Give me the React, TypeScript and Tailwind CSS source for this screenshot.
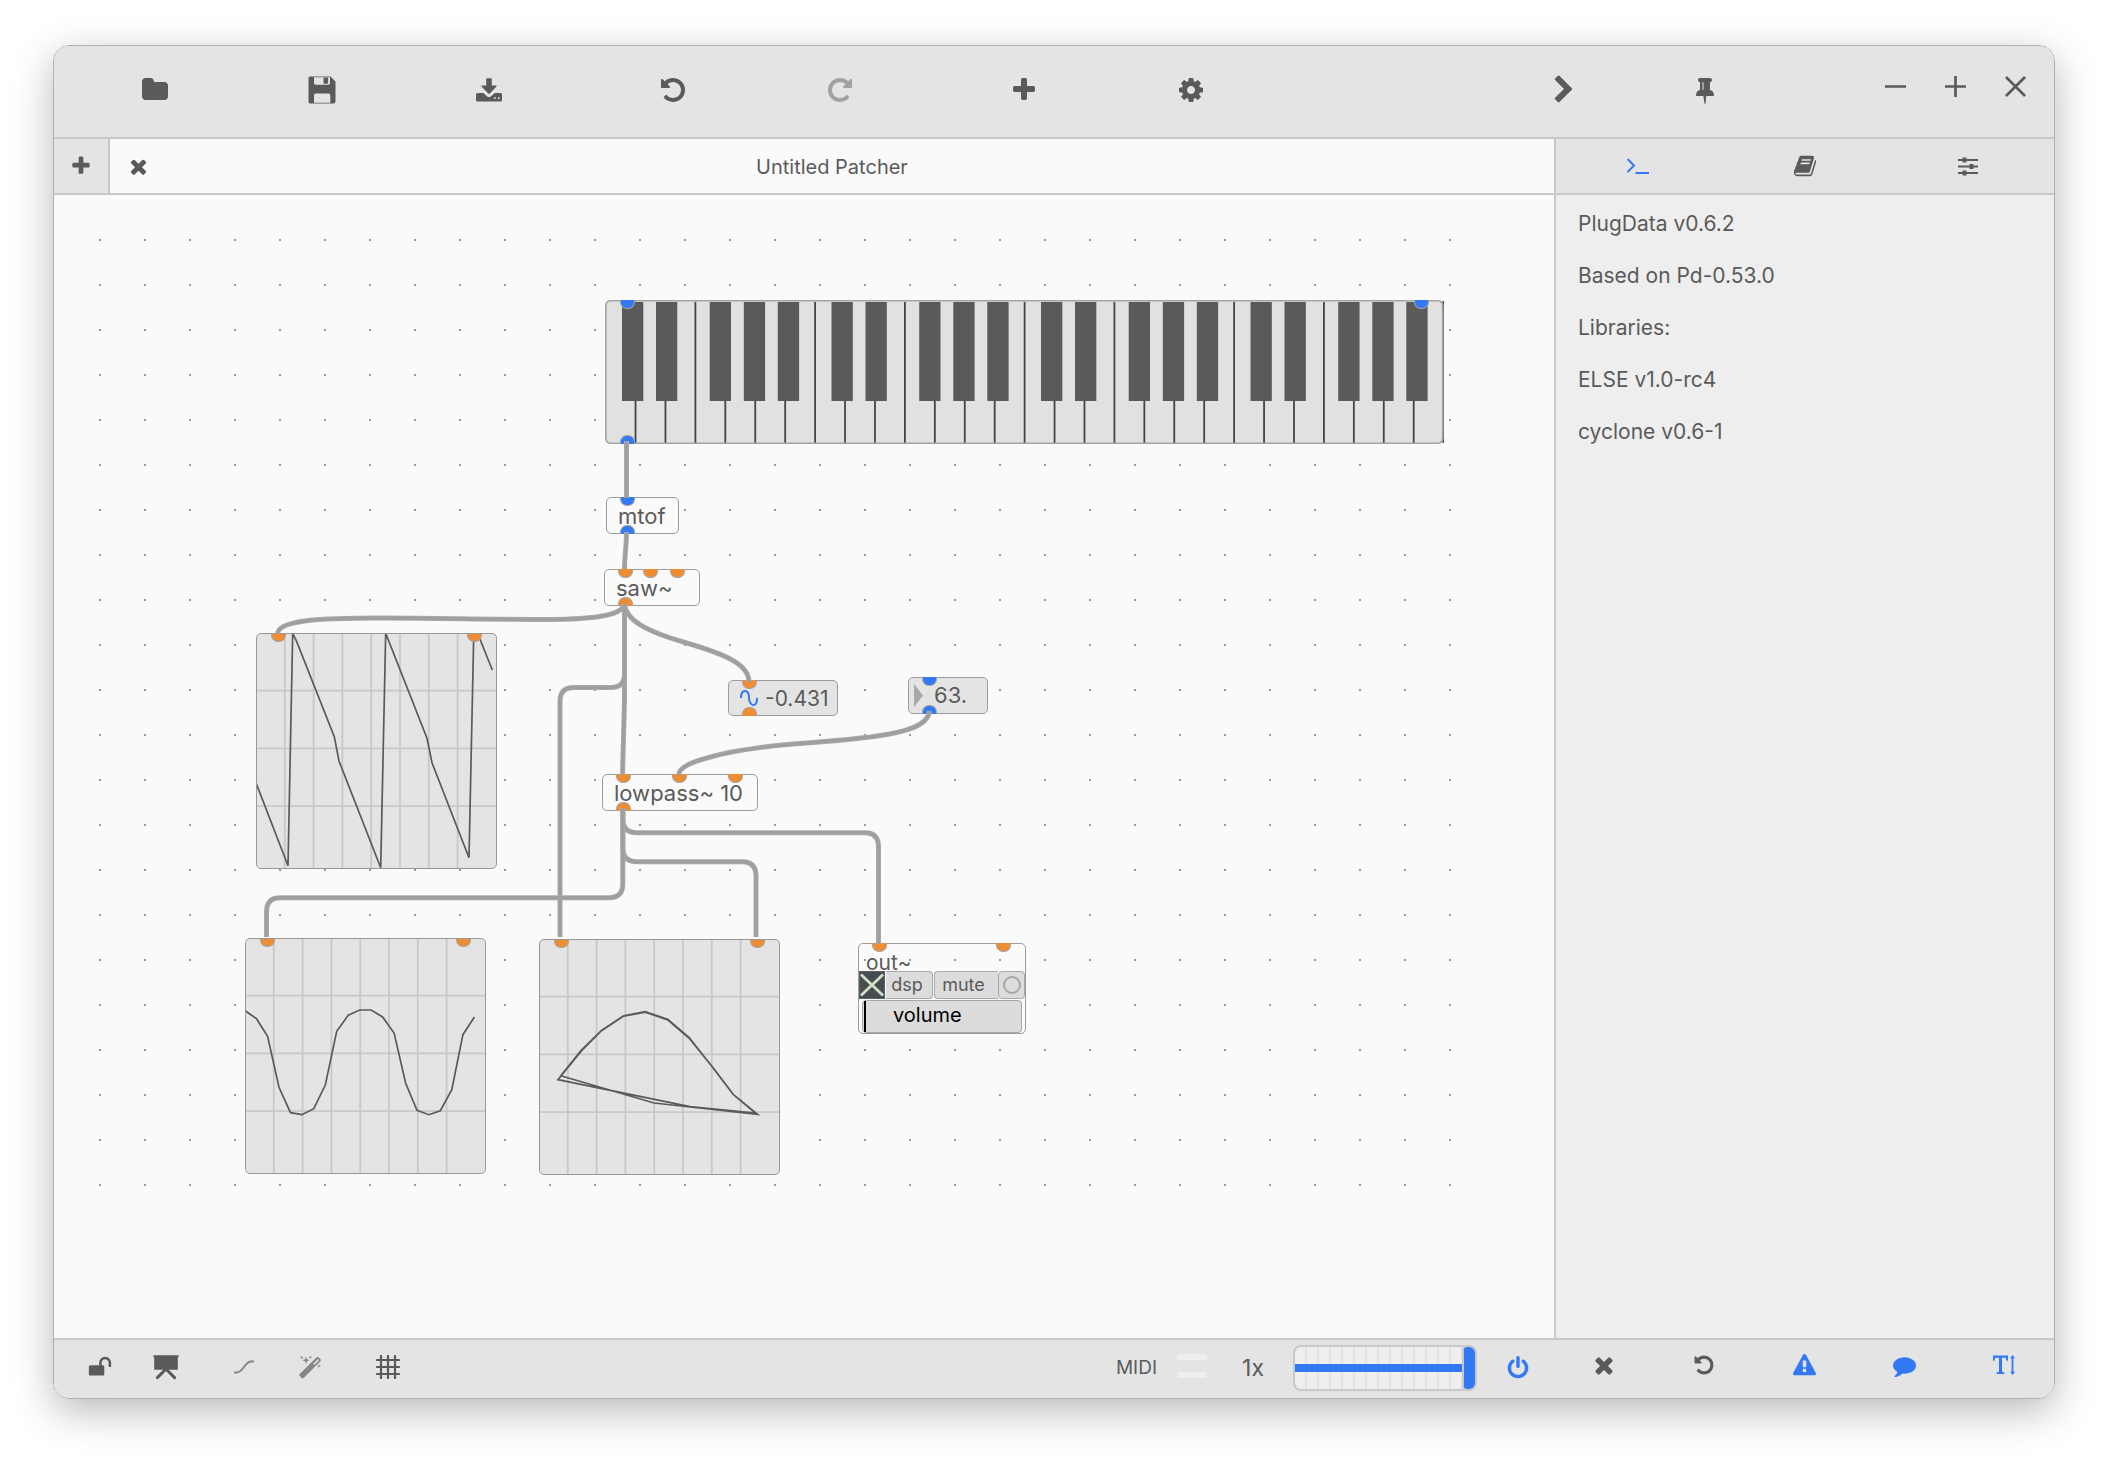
import React from "react";

type IconProps = { className?: string; box?: string; children: React.ReactNode };

function Svg({ className = "", box = "0 0 1792 1792", children }: IconProps) {
  return (
    <svg viewBox={box} className={className} fill="currentColor" aria-hidden="true">
      {children}
    </svg>
  );
}

const P = {
  folder:
    "M1728 608v704q0 92-66 158t-158 66h-1216q-92 0-158-66t-66-158v-960q0-92 66-158t158-66h320q92 0 158 66t66 158v32h672q92 0 158 66t66 158z",
  plus:
    "M1600 736v192q0 40-28 68t-68 28h-416v416q0 40-28 68t-68 28h-192q-40 0-68-28t-28-68v-416h-416q-40 0-68-28t-28-68v-192q0-40 28-68t68-28h416v-416q0-40 28-68t68-28h192q40 0 68 28t28 68v416h416q40 0 68 28t28 68z",
  undo:
    "M1664 896q0 156-61 298t-164 245-245 164-298 61q-172 0-327-72.5t-264-204.5q-7-10-6.5-22.5t8.5-20.5l137-138q10-9 25-9 16 2 23 12 73 95 179 147t225 52q104 0 198.5-40.5t163.5-109.5 109.5-163.5 40.5-198.5-40.5-198.5-109.5-163.5-163.5-109.5-198.5-40.5q-98 0-188 35.5t-160 101.5l137 138q31 30 14 69-17 40-59 40h-448q-26 0-45-19t-19-45v-448q0-42 40-59 39-17 69 14l130 129q107-101 244.5-156.5t284.5-55.5q156 0 298 61t245 164 164 245 61 298z",
  times:
    "M1490 1322q0 40-28 68l-136 136q-28 28-68 28t-68-28l-294-294-294 294q-28 28-68 28t-68-28l-136-136q-28-28-28-68t28-68l294-294-294-294q-28-28-28-68t28-68l136-136q28-28 68-28t68 28l294 294 294-294q28-28 68-28t68 28l136 136q28 28 28 68t-28 68l-294 294 294 294q28 28 28 68z",
  cog:
    "M1152 896q0-106-75-181t-181-75-181 75-75 181 75 181 181 75 181-75 75-181zm512-109v222q0 12-8 23t-20 13l-185 28q-19 54-39 91 35 50 107 138 10 12 10 25t-9 23q-27 37-99 108t-94 71q-12 0-26-9l-138-108q-44 23-91 38-16 136-29 186-7 28-36 28h-222q-14 0-24.5-8.5t-11.5-21.5l-28-184q-49-16-90-37l-141 107q-10 9-25 9-14 0-25-11-126-114-165-168-7-10-7-23 0-12 8-23 15-21 51-66.5t54-70.5q-27-50-41-99l-183-27q-13-2-21-12.5t-8-23.5v-222q0-12 8-23t19-13l186-28q14-46 39-92-40-57-107-138-10-12-10-24 0-10 9-23 26-36 98.5-107.5t94.5-71.5q13 0 26 10l138 107q44-23 91-38 16-136 29-186 7-28 36-28h222q14 0 24.5 8.5t11.5 21.5l28 184q49 16 90 37l142-107q9-9 24-9 13 0 25 10 129 119 165 170 7 8 7 22 0 12-8 23-15 21-51 66.5t-54 70.5q26 50 41 98l183 28q13 2 21 12.5t8 23.5z",
  comment:
    "M1792 896q0 174-120 321.5t-326 233-450 85.5q-70 0-145-8-198 175-460 242-49 14-114 22-17 2-30.5-9t-17.5-29v-1q-3-4-.5-12t2-10 4.5-9.5l6-9 7-8.5 8-9q7-8 31-34.5t34.5-38 31-39.5 32.5-51 27-59 26-76q-157-89-247.5-220t-90.5-281q0-130 71-248.5t191-204.5 286-136.5 348-50.5q244 0 450 85.5t326 233 120 321.5z",
  warning:
    "M1024 1375v-190q0-14-9.5-23.5t-22.5-9.5h-192q-13 0-22.5 9.5t-9.5 23.5v190q0 14 9.5 23.5t22.5 9.5h192q13 0 22.5-9.5t9.5-23.5zm-2-374l18-459q0-12-10-19-13-11-24-11h-220q-11 0-24 11-10 7-10 21l17 457q0 10 10 16.5t24 6.5h185q14 0 23.5-6.5t10.5-16.5zm-14-934l768 1408q35 63-2 126-17 29-46.5 46t-63.5 17h-1536q-34 0-63.5-17t-46.5-46q-37-63-2-126l768-1408q17-31 47-49t65-18 65 18 47 49z",
  power:
    "M1664 896q0 156-61 298t-164 245-245 164-298 61-298-61-245-164-164-245-61-298q0-182 80.5-343t226.5-270q43-32 95.5-25t83.5 50q32 42 24.5 94.5t-49.5 84.5q-98 74-151.5 181t-53.5 228q0 104 40.5 198.5t109.5 163.5 163.5 109.5 198.5 40.5 198.5-40.5 163.5-109.5 109.5-163.5 40.5-198.5q0-121-53.5-228t-151.5-181q-42-32-49.5-84.5t24.5-94.5q31-43 84-50t95 25q146 109 226.5 270t80.5 343zm-640-768v640q0 52-38 90t-90 38-90-38-38-90v-640q0-52 38-90t90-38 90 38 38 90z",
  chevron:
    "M1363 877l-742 742q-19 19-45 19t-45-19l-166-166q-19-19-19-45t19-45l531-531-531-531q-19-19-19-45t19-45l166-166q19-19 45-19t45 19l742 742q19 19 19 45t-19 45z",
  pin:
    "M800 864v-448q0-14-9-23t-23-9-23 9-9 23v448q0 14 9 23t23 9 23-9 9-23zm672 352q0 26-19 45t-45 19h-429l-51 483q-2 12-10.5 20.5t-20.5 8.5h-1q-27 0-32-27l-76-485h-404q-26 0-45-19t-19-45q0-123 78.5-221.5t177.5-98.5v-512q-52 0-90-38t-38-90 38-90 90-38h640q52 0 90 38t38 90-38 90-90 38v512q99 0 177.5 98.5t78.5 221.5z",
  book:
    "M1703 478q40 57 18 129l-275 906q-19 64-76.5 107.5t-122.5 43.5h-923q-77 0-148.5-53.5t-99.5-131.5q-24-67-2-127 0-4 3-27t4-37q1-8-3-21.5t-3-19.5q2-11 8-21t16.5-23.5 16.5-23.5q23-38 45-91.5t30-91.5q3-10 .5-30t-.5-28q3-11 17-28t17-23q21-36 42-92t25-90q1-9-2.5-32t.5-28q4-13 22-30.5t22-22.5q19-26 42.5-84.5t27.5-96.5q1-8-3-25.5t-2-26.5q2-8 9-18t18-23 17-21q8-12 16.5-30.5t15-35 16-36 19.5-32 26.5-23.5 36-11.5 47.5 5.5l-1 3q38-9 51-9h761q74 0 114 56t18 130l-274 906q-36 119-71.5 153.5t-128.5 34.5h-869q-27 0-38 15-11 16-1 43 24 70 144 70h923q29 0 56-15.5t35-41.5l300-987q7-22 5-57 38 15 59 43zm-1064 2q-4 13 2 22.5t20 9.5h608q13 0 25.5-9.5t16.5-22.5l21-64q4-13-2-22.5t-20-9.5h-608q-13 0-25.5 9.5t-16.5 22.5zm-83 256q-4 13 2 22.5t20 9.5h608q13 0 25.5-9.5t16.5-22.5l21-64q4-13-2-22.5t-20-9.5h-608q-13 0-25.5 9.5t-16.5 22.5z",
  unlock:
    "M1728 576v256q0 26-19 45t-45 19h-64q-26 0-45-19t-19-45v-256q0-106-75-181t-181-75-181 75-75 181v192h96q40 0 68 28t28 68v576q0 40-28 68t-68 28h-960q-40 0-68-28t-28-68v-576q0-40 28-68t68-28h672v-192q0-185 131.5-316.5t316.5-131.5 316.5 131.5 131.5 316.5z",
};

function Glyph({ d, className }: { d: string; className: string }) {
  return (
    <Svg className={className}>
      <path d={d} />
    </Svg>
  );
}

function SaveIcon() {
  return (
    <Svg className="size-7" box="0 0 28 28">
      <path
        fillRule="evenodd"
        d="M2 0.500H22.500L27.500 5.500V25.500Q27.500 27.500 25.500 27.500H2Q0.500 27.500 0.500 25.500V2.500Q0.500 0.500 2 0.500ZM6 1.300V7Q6 8.700 7.700 8.700H20.300Q22 8.700 22 7V1.300ZM6 26.800H22.300V19.200Q22.300 17.500 20.600 17.500H7.700Q6 17.500 6 19.200Z"
      />
      <rect x="15.500" y="1.600" width="4.600" height="6.200" rx="1" />
    </Svg>
  );
}

function DownloadIcon() {
  return (
    <Svg className="size-7" box="0 0 28 28">
      <path d="M11.200 3Q11.200 2.200 12 2.200h4q.8 0 .8.800V9.500h4.200q1.400 0 .5 1L14.800 17.600q-.8.800-1.600 0L6.500 10.500q-.9-1 .5-1h4.200z" />
      <path
        fillRule="evenodd"
        d="M2.500 17h5.800l3.600 3.200q2.100 1.700 4.200 0l3.600-3.200h5.800q1.500 0 1.500 1.500v5.500q0 1.500-1.500 1.500h-23q-1.500 0-1.500-1.500v-5.500q0-1.500 1.500-1.500zM19.200 21.200v1.800h1.500v-1.800zM23 21.200v1.800h1.500v-1.800z"
      />
    </Svg>
  );
}

function EaselIcon() {
  return (
    <Svg className="size-[26px]" box="0 0 26 26">
      <path d="M0.500 1.200h25v2h-0.700v12.600H1.200V3.200H0.500z" />
      <path
        d="M4.400 23.600 13 15l8.600 8.600"
        fill="none"
        stroke="currentColor"
        strokeWidth="3"
        strokeLinecap="round"
      />
    </Svg>
  );
}

function WandIcon() {
  return (
    <Svg className="size-6" box="0 0 24 24">
      <path
        fillRule="evenodd"
        d="M18.600 2.300a1.500 1.500 0 0 1 2 0l1.900 1.900a1.500 1.500 0 0 1 0 2L5.600 23a1.500 1.500 0 0 1-2 0l-1.900-1.900a1.500 1.500 0 0 1 0-2zM20 4l-4.800 4.900 1.100 1.100L21 5.200z"
      />
      <path d="M8 1.500 9 4.200l2.700 1L9 6.200 8 8.900 7 6.200l-2.700-1L7 4.200zM3.700.800l.5 1.300 1.300.5-1.300.5-.5 1.300-.5-1.300-1.300-.5 1.300-.5zM12.300.500l.5 1.300 1.300.5-1.300.5-.5 1.300-.5-1.300-1.300-.5 1.300-.5zM21 9.200l.5 1.400 1.400.5-1.400.5-.5 1.400-.5-1.400-1.400-.5 1.400-.5z" />
    </Svg>
  );
}

function TextHeightIcon() {
  return (
    <Svg className="h-5 w-6" box="0 0 24 20">
      <path d="M1 0.500h15v5.200h-1.400l-.8-2.900H10v13.900l2.400.7v1.600H4.600v-1.600l2.400-.7V2.800H3.200l-.8 2.900H1z" />
      <path d="M20.500 0 23 3.200h-1.600v13.600H23L20.500 20 18 16.800h1.600V3.200H18z" />
    </Svg>
  );
}

function ToolButton({
  label,
  className = "",
  children,
}: {
  label: string;
  className?: string;
  children: React.ReactNode;
}) {
  return (
    <button type="button" aria-label={label} className={`flex h-full items-center justify-center ${className}`}>
      {children}
    </button>
  );
}

function Toolbar() {
  return (
    <header className="flex h-[93px] shrink-0 items-stretch border-b-2 border-[#c8c8c8] bg-[#e4e4e4] pb-1 pl-[17px] pr-[9px]">
      <div className="flex gap-[17px]">
        <div className="flex">
          <ToolButton label="Open" className="w-[167px]">
            <Glyph d={P.folder} className="size-7" />
          </ToolButton>
          <ToolButton label="Save" className="w-[167px]">
            <SaveIcon />
          </ToolButton>
          <ToolButton label="Save as" className="w-[167px]">
            <DownloadIcon />
          </ToolButton>
        </div>
        <div className="flex">
          <ToolButton label="Undo" className="w-[167px]">
            <Glyph d={P.undo} className="size-7" />
          </ToolButton>
          <ToolButton label="Redo" className="w-[167px] text-[#a1a1a1]">
            <Glyph d={P.undo} className="size-7 -scale-x-100" />
          </ToolButton>
        </div>
        <div className="flex">
          <ToolButton label="Add object" className="w-[167px]">
            <Glyph d={P.plus} className="size-7" />
          </ToolButton>
          <ToolButton label="Settings" className="w-[167px]">
            <Glyph d={P.cog} className="size-7" />
          </ToolButton>
        </div>
      </div>
      <div className="ml-auto flex">
        <ToolButton label="Hide sidebar" className="w-[141px]">
          <Glyph d={P.chevron} className="size-[30px]" />
        </ToolButton>
        <ToolButton label="Pin sidebar" className="mr-[90px] w-[141px]">
          <Glyph d={P.pin} className="size-7" />
        </ToolButton>
        <div className="flex pb-[6px]">
          {[
            ["Minimise", "M0 11H22"],
            ["Maximise", "M0 11H22M11 0V22"],
            ["Close", "M1 1 21 21M21 1 1 21"],
          ].map(([label, d]) => (
            <ToolButton key={label} label={label} className="w-[60px]">
              <svg viewBox="0 0 22 22" className="size-[21px]" fill="none" stroke="currentColor" strokeWidth="2.800">
                <path d={d} />
              </svg>
            </ToolButton>
          ))}
        </div>
      </div>
    </header>
  );
}

/* Inlets sit on the top edge of an object, outlets on the bottom edge. */
function Inlet({ className }: { className: string }) {
  return <span className={`absolute -top-px h-[9px] w-[15px] rounded-b-[7px] border border-t-0 border-[#a3a3a3] ${className}`} />;
}
function Outlet({ className }: { className: string }) {
  return <span className={`absolute -bottom-px h-[9px] w-[15px] rounded-t-[7px] border border-b-0 border-[#a3a3a3] ${className}`} />;
}

const WHITE = 29.93;
const BLACK_OFFSETS = [17, 51, 104.700, 138.800, 172.800];

function Keyboard() {
  const blacks = [0, 1, 2, 3].flatMap((o) => BLACK_OFFSETS.map((b) => b + o * WHITE * 7));
  return (
    <div className="absolute left-[551px] top-[105px] h-[144px] w-[839px]">
      <svg viewBox="0 0 839 144" className="size-full" aria-label="Keyboard">
        <rect x="1" y="1" width="837" height="142" rx="4" fill="#e1e1e1" />
        {Array.from({ length: 27 }, (_, i) => (
          <rect key={i} x={(i + 1) * WHITE - 0.300} y="2" width="1.800" height="141" fill="#444444" />
        ))}
        {blacks.map((x) => (
          <rect key={x} x={x} y="2" width="21.300" height="99" fill="#5a5a5a" />
        ))}
        <rect x="837.500" y="1" width="1.500" height="142" fill="#444444" />
        <rect x="0.750" y="0.750" width="837" height="142.500" rx="5" fill="none" stroke="#a5a5a5" strokeWidth="1.700" />
      </svg>
      <Inlet className="left-[15px] top-0 bg-[#3379f6]" />
      <Inlet className="left-[809px] top-0 bg-[#3379f6]" />
      <Outlet className="bottom-0 left-[15px] bg-[#3379f6]" />
    </div>
  );
}

function Scope({ place, points }: { place: string; points: string }) {
  return (
    <div className={`absolute h-[236px] w-[241px] overflow-hidden rounded-[5px] border border-[#989898] bg-[#e4e4e4] ${place}`}>
      <svg viewBox="1 1 239 234" className="size-full" aria-label="Oscilloscope">
        <g stroke="#c8c8c8" strokeWidth="1.800">
          {[1, 2, 3, 4, 5, 6, 7].map((i) => (
            <path key={i} d={`M${i * 28.800} 0V236`} />
          ))}
          {[1, 2, 3].map((i) => (
            <path key={i} d={`M0 ${i * 57.700}H241`} />
          ))}
        </g>
        <polyline points={points} fill="none" stroke="#5a5a5a" strokeWidth="1.700" />
      </svg>
      <Inlet className="left-[14px] bg-[#f08c32]" />
      <Inlet className="left-[210px] bg-[#f08c32]" />
    </div>
  );
}

const SAW =
  "0,149.700 32,232.700 36.700,0.300 40.700,8.700 78.300,103.700 83,128 124.700,234.700 129.700,0.300 171,105.300 176,129.700 213,224.700 217.700,3.700 222.300,2 236.300,37";
const SINE =
  "0,72.700 11.500,80.700 22.600,98.300 34,149.300 45.500,174.700 57,176.700 68.800,170.700 80.300,147 91.700,93.300 103.200,77.300 114.700,72 126.200,72 137.600,79 149.100,95 160.600,145 172,172.300 183.900,176.700 195.300,172.700 206.800,151.700 217.900,96.700 229.400,79";
const PHASE =
  "21.800,136.700 42.200,111.300 62.500,91.300 84.700,76.700 106.200,72.700 128.700,80.300 150.200,98.700 172.400,126.700 194.200,155.300 216.400,174 151,167.700 18.900,140.700 42.600,111.700 62.500,91.700 84.700,77.100 106.200,73.100 128.700,80.900 150.200,99.300 172.800,127.100 194.200,155.300 218.600,175.300 151,168 115,164 21.800,136.700";

const WIRES = [
  "M626.500 441V498",
  "M626.500 532C626.500 548 624.500 554 624.500 569",
  "M624.500 604C622 618 580 619.500 540 619.500C480 619.500 440 618 380 618C320 618 278 620 277.500 634",
  "M624.500 604C626 620 645 631 685 642.500C728 655 749 665 749 682",
  "M624.500 604V700L622.500 775",
  "M624.500 604V674Q624.500 687.500 611 687.500H574Q560 687.500 560 701V937",
  "M622.800 808V819Q622.800 832.700 637 832.700H865Q878.500 832.700 878.500 847V944",
  "M622.800 808V848Q622.800 861.700 637 861.700H742Q756 861.700 756 876V937",
  "M622.800 808V884Q622.800 897.700 609 897.700H280Q266.500 897.700 266.500 912V937",
  "M929.500 711C928 726 905 732 877 736C850 740 820 742 793 744C760 747 730 751 707 758C688 763 679 769 678.500 775",
];

function Wires() {
  return (
    <svg viewBox="54 195 1500 1143" className="pointer-events-none absolute left-0 top-0 h-[1143px] w-[1500px]" fill="none">
      {WIRES.map((d) => (
        <g key={d}>
          <path d={d} stroke="#acacac" strokeWidth="5" />
          <path d={d} stroke="#9f9f9f" strokeWidth="3.400" />
        </g>
      ))}
    </svg>
  );
}

const OBJ = "absolute rounded-[5px] border border-[#9c9c9c] text-[22px] leading-[37px]";

function OutObject() {
  return (
    <div className="absolute left-[804px] top-[748px] h-[91px] w-[168px] rounded-[5px] border border-[#9c9c9c]">
      <div className="h-[27px] pl-[7px] text-[21px] leading-[37px]">out~</div>
      <div className="relative flex h-7 text-[18px] leading-[24px]">
        <label className="relative block w-[26px] border border-[#5a6064] bg-[#474c50]">
          <input type="checkbox" defaultChecked aria-label="dsp toggle" className="absolute inset-0 size-full opacity-0" />
          <svg viewBox="0 0 25 26" className="size-full" stroke="#cfe1c3" strokeWidth="3">
            <path d="M1 2 24 24M24 2 1 24" />
          </svg>
        </label>
        <button type="button" className="ml-px w-[47px] rounded-r-[4px] border border-l-0 border-[#a8a8a8] bg-[#dcdcdc] pr-1">dsp</button>
        <button type="button" className="ml-px w-[64px] rounded-l-[4px] border border-r-0 border-[#a8a8a8] bg-[#dcdcdc] pr-[6px]">mute</button>
        <button
          type="button"
          aria-label="bang"
          className="flex w-[27px] items-center justify-center rounded-[4px] border border-[#a8a8a8] bg-[#dcdcdc]"
        >
          <span className="size-[18px] rounded-full border-2 border-[#a8a8a8]" />
        </button>
      </div>
      <div className="mx-[3px] mt-px flex h-[33px] items-stretch rounded-[4px] border border-[#a8a8a8] bg-[#dcdcdc] text-[20px] leading-[29px] text-black">
        <span className="ml-px w-[2px] bg-black" />
        <span className="ml-[27px]">volume</span>
      </div>
      <Inlet className="left-[13px] bg-[#f08c32]" />
      <Inlet className="left-[137px] bg-[#f08c32]" />
    </div>
  );
}

function Canvas() {
  return (
    <main className="relative min-h-[1143px] flex-1 overflow-hidden bg-[#fafafa]">
      <svg className="absolute left-[45px] top-[44px] h-[947px] w-[1352px]" aria-hidden="true">
        <defs>
          <pattern id="dots" width="45" height="45" patternUnits="userSpaceOnUse">
            <rect width="2" height="2" fill="#9a9a9a" />
          </pattern>
        </defs>
        <rect width="1352" height="947" fill="url(#dots)" />
      </svg>

      <Keyboard />

      <div className={`${OBJ} left-[552px] top-[302px] h-[37px] w-[73px] bg-[#fafafa] pl-[11px]`}>
        mtof
        <Inlet className="left-[13px] bg-[#3379f6]" />
        <Outlet className="left-[13px] bg-[#3379f6]" />
      </div>

      <div className={`${OBJ} left-[550px] top-[374px] h-[37px] w-[96px] bg-[#fafafa] pl-[11px]`}>
        saw~
        <Inlet className="left-[13px] bg-[#f08c32]" />
        <Inlet className="left-[38px] bg-[#f08c32]" />
        <Inlet className="left-[65px] bg-[#f08c32]" />
        <Outlet className="left-[13px] bg-[#f08c32]" />
      </div>

      <div className={`${OBJ} left-[674px] top-[485px] flex h-[36px] w-[110px] items-center bg-[#e4e4e4] pl-[11px]`}>
        <svg viewBox="0 0 18 16" className="h-4 w-[18px]" fill="none" stroke="#3379f6" strokeWidth="2">
          <path d="M1 8C1 3 3 1 5 1C8 1 9 4 9 8C9 12 11 15 13.500 15C16 15 17 12 17 8" />
        </svg>
        <output className="ml-[7px] text-[21px]">-0.431</output>
        <Inlet className="left-[13px] bg-[#f08c32]" />
        <Outlet className="left-[13px] bg-[#f08c32]" />
      </div>

      <div className={`${OBJ} left-[854px] top-[482px] flex h-[37px] w-[80px] items-center bg-[#e4e4e4] pl-[5px]`}>
        <svg viewBox="0 0 9 23" className="h-[23px] w-[9px]" fill="#a8a8a8">
          <path d="M0 0 9 11.500 0 23z" />
        </svg>
        <input aria-label="Cutoff" defaultValue="63." className="ml-[11px] w-12 bg-transparent" />
        <Inlet className="left-[13px] bg-[#3379f6]" />
        <Outlet className="left-[13px] bg-[#3379f6]" />
      </div>

      <div className={`${OBJ} left-[548px] top-[579px] h-[37px] w-[156px] bg-[#fafafa] pl-[11px]`}>
        lowpass~ 10
        <Inlet className="left-[13px] bg-[#f08c32]" />
        <Inlet className="left-[69px] bg-[#f08c32]" />
        <Inlet className="left-[125px] bg-[#f08c32]" />
        <Outlet className="left-[13px] bg-[#f08c32]" />
      </div>

      <Scope place="left-[202px] top-[438px]" points={SAW} />
      <Scope place="left-[191px] top-[743px]" points={SINE} />
      <Scope place="left-[485px] top-[744px]" points={PHASE} />
      <OutObject />
      <Wires />
    </main>
  );
}

function Sidebar() {
  return (
    <aside className="flex w-[500px] shrink-0 flex-col border-l-2 border-[#c8c8c8] bg-[#eeeeee]">
      <div className="flex h-14 shrink-0 border-b-2 border-[#c8c8c8] bg-[#e4e4e4] pr-1">
        <ToolButton label="Console" className="flex-1 pr-[3px] text-[#3379f6]">
          <svg viewBox="0 0 24 18" className="h-[18px] w-6" fill="none" stroke="currentColor" strokeWidth="2">
            <path d="M1.500 2 8 8.500 1.500 15M9.500 16H23" />
          </svg>
        </ToolButton>
        <ToolButton label="Documentation" className="flex-1">
          <Glyph d={P.book} className="size-6" />
        </ToolButton>
        <ToolButton label="Parameters" className="flex-1">
          <svg viewBox="0 0 20 20" className="size-5" fill="none" stroke="currentColor" strokeWidth="2">
            <path d="M0 4H20M0 10.500H20M0 17H20" />
            <path d="M6.500 1.500V6.500M13.500 8V13M6.500 14.500V19.500" strokeWidth="4" />
          </svg>
        </ToolButton>
      </div>
      <ul className="px-[22px] pt-[3px] text-[21px] leading-[52px]">
        <li>PlugData v0.6.2</li>
        <li>Based on Pd-0.53.0</li>
        <li>Libraries:</li>
        <li>ELSE v1.0-rc4</li>
        <li>cyclone v0.6-1</li>
      </ul>
    </aside>
  );
}

function StatusBar() {
  return (
    <footer className="flex h-[60px] shrink-0 items-center border-t-2 border-[#c8c8c8] bg-[#e4e4e4]">
      <div className="flex h-full items-center pb-1 pl-3">
        <ToolButton label="Edit mode" className="w-[67px]">
          <Glyph d={P.unlock} className="size-6" />
        </ToolButton>
        <ToolButton label="Presentation mode" className="w-[66px]">
          <EaselIcon />
        </ToolButton>
        <ToolButton label="Connection style" className="ml-3 w-[66px] text-[#868686]">
          <svg viewBox="0 0 22 14" className="h-[14px] w-[22px]" fill="none" stroke="currentColor" strokeWidth="2">
            <path d="M1 12.500H4C10 12.500 12 1.500 18 1.500H21" />
          </svg>
        </ToolButton>
        <ToolButton label="Tidy connections" className="w-[66px] text-[#868686]">
          <WandIcon />
        </ToolButton>
        <ToolButton label="Grid" className="ml-3 w-[66px]">
          <svg viewBox="0 0 24 24" className="size-6" fill="none" stroke="currentColor" strokeWidth="2.200" strokeLinecap="round">
            <path d="M5 1V23M12 1V23M19 1V23M1 5H23M1 12H23M1 19H23" />
          </svg>
        </ToolButton>
      </div>
      <div className="ml-auto flex h-full items-center pb-[2px]">
        <span className="text-[19px]">MIDI</span>
        <span className="ml-5 flex flex-col gap-3 pb-1">
          <i className="h-[6px] w-[30px] rounded-sm bg-[#eeeeee]" />
          <i className="h-[6px] w-[30px] rounded-sm bg-[#eeeeee]" />
        </span>
        <button type="button" className="ml-[14px] w-[64px] text-[23px]">1x</button>
        <span className="ml-2 flex h-[46px] w-[184px] overflow-hidden rounded-[8px] border-2 border-[#c8c8c8] bg-[#eeeeee] bg-[repeating-linear-gradient(90deg,transparent_0_10px,#e2e2e2_10px_12px)]">
          <input
            type="range"
            aria-label="Volume"
            defaultValue={100}
            className="h-full w-full appearance-none bg-transparent bg-[linear-gradient(#3379f6,#3379f6)] bg-[length:100%_8px] bg-center bg-no-repeat [&::-webkit-slider-thumb]:h-[42px] [&::-webkit-slider-thumb]:w-[11px] [&::-webkit-slider-thumb]:appearance-none [&::-webkit-slider-thumb]:rounded-[3px] [&::-webkit-slider-thumb]:bg-[#3379f6] [&::-webkit-slider-thumb]:shadow-[-2px_0_0_#c8c8c8]"
          />
        </span>
        <ToolButton label="Audio on" className="w-[77px] pl-1 text-[#3379f6]">
          <Glyph d={P.power} className="size-6" />
        </ToolButton>
      </div>
      <div className="flex h-full w-[500px] pb-2">
        <ToolButton label="Clear console" className="flex-1">
          <Glyph d={P.times} className="size-[26px]" />
        </ToolButton>
        <ToolButton label="Restore console" className="flex-1">
          <Glyph d={P.undo} className="size-[22px]" />
        </ToolButton>
        <ToolButton label="Show errors" className="flex-1 text-[#3379f6]">
          <Glyph d={P.warning} className="size-[23px]" />
        </ToolButton>
        <ToolButton label="Show messages" className="flex-1 text-[#3379f6]">
          <Glyph d={P.comment} className="size-[23px]" />
        </ToolButton>
        <ToolButton label="Text height" className="flex-1 text-[#3379f6]">
          <TextHeightIcon />
        </ToolButton>
      </div>
    </footer>
  );
}

export default function App() {
  return (
    <div className="flex min-h-screen bg-white px-[53px] pb-[61px] pt-[45px] font-[Inter,sans-serif] text-[#5a5a5a]">
      <div className="flex min-w-0 flex-1 flex-col overflow-hidden rounded-[16px] border border-[#b0b0b0] shadow-[0_12px_40px_rgba(0,0,0,0.28)]">
        <Toolbar />
        <div className="flex flex-1">
          <div className="flex min-w-0 flex-1 flex-col">
            <div className="flex h-14 shrink-0 items-stretch border-b-2 border-[#c8c8c8] bg-[#fafafa]">
              <ToolButton label="New tab" className="w-14 border-r-2 border-[#c8c8c8] bg-[#e4e4e4]">
                <Glyph d={P.plus} className="size-[22px]" />
              </ToolButton>
              <ToolButton label="Close tab" className="w-14">
                <Glyph d={P.times} className="size-[23px]" />
              </ToolButton>
              <button type="button" className="mr-14 flex-1 pt-[2px] text-[20px]">Untitled Patcher</button>
            </div>
            <Canvas />
          </div>
          <Sidebar />
        </div>
        <StatusBar />
      </div>
    </div>
  );
}
